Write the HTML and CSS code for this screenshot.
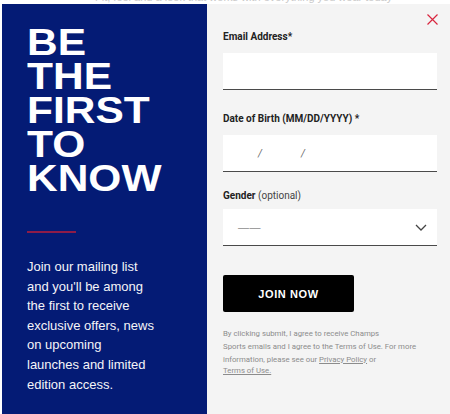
FILE: index.html
```html
<!DOCTYPE html>
<html lang="en">
<head>
<meta charset="utf-8">
<title>Be the first to know</title>
<link rel="stylesheet" href="styles.css">
</head>
<body>
<div class="page-behind"><span class="behind-text">Fit, feel and a look that works with everything you wear today</span></div>
<div class="modal">
  <section class="promo">
    <h1 class="headline"><span class="hl">BE</span><span class="hl">THE</span><span class="hl">FIRST</span><span class="hl">TO</span><span class="hl">KNOW</span></h1>
    <div class="rule"></div>
    <p class="pitch">Join our mailing list and you'll be among the first to receive exclusive offers, news on upcoming launches and limited edition access.</p>
  </section>
  <section class="form-panel">
    <button class="close" aria-label="Close">
      <svg width="11" height="11" viewBox="0 0 11 11"><path d="M0.5 0.5L10.5 10.5M10.5 0.5L0.5 10.5" stroke="#d8263f" stroke-width="1.2" fill="none"/></svg>
    </button>
    <form class="form">
      <label class="label label-email">Email Address*</label>
      <div class="field"></div>
      <label class="label label-dob">Date of Birth (MM/DD/YYYY) *</label>
      <div class="field dob"><span class="slash">/</span><span class="slash">/</span></div>
      <label class="label label-gender">Gender <span class="opt">(optional)</span></label>
      <div class="field select"><span class="dash">——</span>
        <svg class="chev" width="12" height="7" viewBox="0 0 12 7"><path d="M1 1L6 6L11 1" stroke="#444" stroke-width="1.3" fill="none"/></svg>
      </div>
      <button type="button" class="join">JOIN NOW</button>
      <p class="legal">By clicking submit, I agree to receive Champs<br>Sports emails and I agree to the Terms of Use. For more<br>information, please see our <a href="#">Privacy Policy</a> or</p>
      <a class="legal-link" href="#">Terms of Use.</a>
    </form>
  </section>
</div>
</body>
</html>
```
FILE: styles.css
```css
* { box-sizing: border-box; }
html, body { margin: 0; padding: 0; }
body {
  background: #ffffff;
  width: 450px;
  height: 414px;
  overflow: hidden;
  font-family: "Liberation Sans", Arial, sans-serif;
}
.page-behind {
  height: 4px;
  overflow: hidden;
  padding-left: 95px;
}
.behind-text {
  display: block;
  font-size: 11px;
  line-height: 11px;
  margin-top: -8px;
  color: #c9c9c9;
  white-space: nowrap;
}
.modal {
  display: flex;
  height: 410px;
  margin-left: 2px;
}
.promo {
  width: 205px;
  flex: none;
  background: #041b75;
  padding: 22px 0 0 25px;
  color: #fff;
}
.headline {
  margin: 0;
  font-family: "Liberation Sans", Arial, sans-serif;
  font-weight: 700;
  font-size: 36px;
  line-height: 34px;
  color: #fff;
  transform: scaleX(1.18);
  transform-origin: left top;
  width: 150px;
  display: flex;
  flex-direction: column;
}
.hl {
  display: block;
  height: 34px;
  line-height: 34px;
}
.rule {
  width: 49px;
  height: 2px;
  background: #8e1c48;
  margin: 35px 0 0 0;
}
.pitch {
  margin: 24px 0 0 0;
  width: 129px;
  font-size: 13px;
  line-height: 19.6px;
  color: #f4f4f8;
}
.form-panel {
  flex: 1;
  position: relative;
  background: #f4f4f4;
  padding: 27px 13px 0 16px;
  font-family: Roboto, "Liberation Sans", sans-serif;
}
.close {
  position: absolute;
  top: 10px;
  right: 12px;
  background: none;
  border: 0;
  padding: 0;
  width: 11px;
  height: 11px;
  cursor: pointer;
}
.close svg { display: block; }
.form { display: flex; flex-direction: column; }
.label {
  display: block;
  font-size: 10px;
  line-height: 12px;
  font-weight: 700;
  color: #222;
}
.opt { font-weight: 400; color: #444; }
.label-email { margin-bottom: 10px; }
.label-dob { margin-top: 23px; margin-bottom: 10px; }
.label-gender { margin-top: 18px; margin-bottom: 7px; }
.field {
  height: 37px;
  background: #fff;
  border-bottom: 1px solid #4a4a4a;
  display: flex;
  align-items: center;
}
.dob { padding-left: 35px; gap: 39px; }
.slash { font-size: 10px; color: #666; font-style: italic; }
.select { justify-content: space-between; padding: 0 10px 0 15px; }
.dash {
  font-family: "Liberation Sans", Arial, sans-serif;
  font-size: 11px;
  color: #8a8a8a;
  letter-spacing: 0.5px;
}
.chev { display: block; }
.join {
  margin-top: 29px;
  width: 131px;
  height: 37px;
  background: #000;
  color: #fff;
  border: 0;
  border-radius: 2px;
  font-family: "Liberation Sans", Arial, sans-serif;
  font-weight: 700;
  font-size: 11px;
  letter-spacing: 0.6px;
  cursor: pointer;
}
.legal {
  margin: 15px 0 0 0;
  font-size: 7.8px;
  line-height: 13px;
  color: #8c8c8c;
}
.legal a, .legal-link { color: #8c8c8c; }
.legal-link {
  font-size: 7.8px;
  line-height: 10px;
  align-self: flex-start;
}
```
